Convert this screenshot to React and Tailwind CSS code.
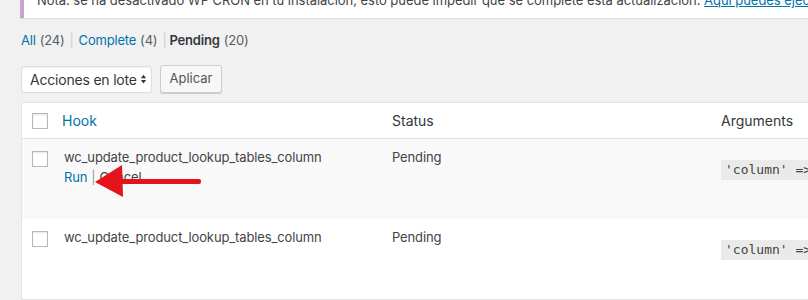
import React from 'react'

const rows = [
  { hook: 'wc_update_product_lookup_tables_column', status: 'Pending', actions: true, alt: true },
  { hook: 'wc_update_product_lookup_tables_column', status: 'Pending', actions: false, alt: false },
]

function Checkbox() {
  return <div className="w-4 h-4 bg-white border border-[#b4b9be] shadow-[inset_0_1px_2px_rgba(0,0,0,0.1)]" />
}

function App() {
  return (
    <div className="relative h-[300px] overflow-hidden bg-[#f1f1f1] pl-[20px] text-[13px] text-[#444] font-['Inter',sans-serif]">
      {/* Notice */}
      <div className="-mt-[12px] bg-white border-l-4 border-[#c9a3c9] shadow-[0_1px_1px_rgba(0,0,0,0.08)] pt-[2px] pb-[8px] pl-[13px] leading-[20px] whitespace-nowrap tracking-[-0.04px]">
        Nota: se ha desactivado WP CRON en tu instalación, esto puede impedir que se complete esta actualización.{' '}
        <a className="text-[#0073aa] underline">Aquí puedes ejecutar la actualización manualmente.</a>
      </div>

      {/* Filters */}
      <div className="mt-[12px] pl-[1px] leading-[20px] text-[#555d66] flex items-center tracking-[-0.2px] whitespace-nowrap">
        <a className="text-[#0073aa]">All</a>
        <span className="ml-1">(24)</span>
        <span className="mx-[5px] text-[#ccc]">|</span>
        <a className="text-[#0073aa]">Complete</a>
        <span className="ml-1">(4)</span>
        <span className="ml-[5px] mr-[3px] text-[#ccc]">|</span>
        <span className="font-semibold text-[#32373c]">Pending</span>
        <span className="ml-1">(20)</span>
      </div>

      {/* Bulk actions */}
      <div className="mt-[15px] flex items-center gap-[8px] pl-[1px]">
        <div className="w-[131px] h-[27px] bg-white border border-[#ddd] rounded-[3px] shadow-[inset_0_1px_2px_rgba(0,0,0,0.07)] flex items-center justify-between pl-[8px] pr-[4px] text-[14px] text-[#32373c] whitespace-nowrap tracking-[-0.2px]">
          <span>Acciones en lote</span>
          <svg width="7" height="12" viewBox="0 0 8 12" className="fill-[#32373c] shrink-0">
            <path d="M4 1 L7 5 L1 5 Z" />
            <path d="M4 11 L7 7 L1 7 Z" />
          </svg>
        </div>
        <button className="w-[62px] h-[28px] bg-[#f7f7f7] border border-[#ccc] rounded-[3px] shadow-[0_1px_0_#ccc] text-[13px] text-[#555]">
          Aplicar
        </button>
      </div>

      {/* Table */}
      <div className="mt-[9px] ml-[1px] w-[1000px] bg-white border border-[#e5e5e5] shadow-[0_1px_1px_rgba(0,0,0,0.04)]">
        <div className="grid grid-cols-[40px_330px_329px_1fr] h-[36px] items-center border-b border-[#e1e1e1] text-[#32373c]">
          <div className="pl-[10px]"><Checkbox /></div>
          <div className="text-[14px] text-[#0073aa]">Hook</div>
          <div className="text-[14px]">Status</div>
          <div className="text-[14px]">Arguments</div>
        </div>
        {rows.map((r, i) => (
          <div
            key={i}
            className={`grid grid-cols-[40px_330px_329px_1fr] h-[80px] items-start leading-[20px] tracking-[-0.13px] ${r.alt ? 'bg-[#f9f9f9]' : 'bg-white'}`}
          >
            <div className="pl-[10px] pt-[12px]"><Checkbox /></div>
            <div className="pt-[8px] pl-[2px]">
              <div>{r.hook}</div>
              {r.actions && (
                <div>
                  <a className="text-[#0073aa]">Run</a>
                  <span className="mx-[4px] text-[#999]">|</span>
                  <a className="text-[#444]">Cancel</a>
                </div>
              )}
            </div>
            <div className="pt-[8px]">{r.status}</div>
            <div className="pt-[20px]">
              <code className="inline-block bg-[#eaeaea] px-[4px] leading-[20px] font-['DejaVu_Sans_Mono',monospace] text-[13px] text-[#444] tracking-normal">
                'column' =&gt; 'min_max_price'
              </code>
            </div>
          </div>
        ))}
      </div>

      {/* Annotation arrow */}
      <svg className="absolute left-0 top-0 pointer-events-none" width="808" height="300">
        <rect x="118" y="179" width="83" height="5" rx="2" fill="#e5131b" />
        <polygon points="95,182 122,165 123,197" fill="#e5131b" />
      </svg>
    </div>
  )
}

export default App
